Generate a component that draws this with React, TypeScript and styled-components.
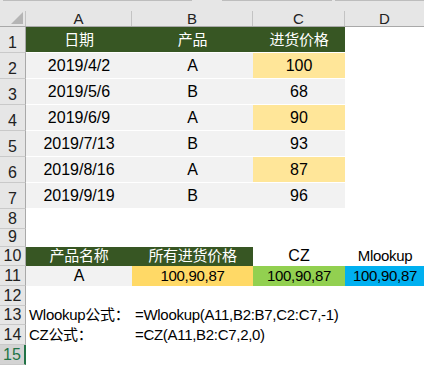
import styled, { createGlobalStyle } from "styled-components";

const GlobalStyle = createGlobalStyle`
  html, body {
    margin: 0;
    padding: 0;
    background: #fff;
    overflow: hidden;
  }
  body {
    font-family: "Liberation Sans Narrow", "Liberation Sans", "Noto Sans CJK SC", sans-serif;
    color: #000;
  }
`;

const COLS = "26px 106px 121px 92px 80px";

const DARK = "#375623";
const GREY = "#f2f2f2";
const PALE = "#ffe699";
const GOLD = "#ffd966";
const LIME = "#92d050";
const SKY = "#00b0f0";

type CellDef = {
  text?: string;
  bg?: string;
  fg?: string;
  left?: boolean;
  tight?: boolean;
};

type RowDef = {
  n: number;
  h: number;
  sep?: boolean;
  cells: CellDef[];
};

const head = (text: string): CellDef => ({ text, bg: DARK, fg: "#fff", tight: true });

const gridRows: RowDef[] = [
  { n: 1, h: 26, sep: true, cells: [head("日期"), head("产品"), head("进货价格"), {}] },
  { n: 2, h: 26, sep: true, cells: [{ text: "2019/4/2", bg: GREY }, { text: "A", bg: GREY }, { text: "100", bg: PALE }, {}] },
  { n: 3, h: 26, sep: true, cells: [{ text: "2019/5/6", bg: GREY }, { text: "B", bg: GREY }, { text: "68", bg: GREY }, {}] },
  { n: 4, h: 26, sep: true, cells: [{ text: "2019/6/9", bg: GREY }, { text: "A", bg: GREY }, { text: "90", bg: PALE }, {}] },
  { n: 5, h: 26, sep: true, cells: [{ text: "2019/7/13", bg: GREY }, { text: "B", bg: GREY }, { text: "93", bg: GREY }, {}] },
  { n: 6, h: 26, sep: true, cells: [{ text: "2019/8/16", bg: GREY }, { text: "A", bg: GREY }, { text: "87", bg: PALE }, {}] },
  { n: 7, h: 26, sep: true, cells: [{ text: "2019/9/19", bg: GREY }, { text: "B", bg: GREY }, { text: "96", bg: GREY }, {}] },
  { n: 8, h: 20, cells: [{}, {}, {}, {}] },
  { n: 9, h: 18, cells: [{}, {}, {}, {}] },
  {
    n: 10,
    h: 19,
    cells: [head("产品名称"), head("所有进货价格"), { text: "CZ" }, { text: "Mlookup", tight: true }],
  },
  {
    n: 11,
    h: 20,
    cells: [
      { text: "A", bg: GREY },
      { text: "100,90,87", bg: GOLD, tight: true },
      { text: "100,90,87", bg: LIME, tight: true },
      { text: "100,90,87", bg: SKY, tight: true },
    ],
  },
  { n: 12, h: 20, cells: [{}, {}, {}, {}] },
  {
    n: 13,
    h: 19,
    cells: [
      { text: "Wlookup公式：", left: true, tight: true },
      { text: "=Wlookup(A11,B2:B7,C2:C7,-1)", left: true, tight: true },
      {},
      {},
    ],
  },
  {
    n: 14,
    h: 20,
    cells: [
      { text: "CZ公式：", left: true, tight: true },
      { text: "=CZ(A11,B2:C7,2,0)", left: true, tight: true },
      {},
      {},
    ],
  },
  { n: 15, h: 20, cells: [{}, {}, {}, {}] },
];

const letters = ["A", "B", "C", "D"];

export default function App() {
  return (
    <>
      <GlobalStyle />
      <Sheet>
        <HeadBar>
          <StripRow>
            <StripGap $w={3} />
            <StripLine $w={189} />
            <StripGap $w={30} />
            <StripLine $w={110} />
            <StripGap $w={3} />
            <StripLine $w={89} />
          </StripRow>
          <ColHeads>
            <ColHead>
              <Corner>
                <svg width="12" height="12" viewBox="0 0 12 12">
                  <polygon points="12,0 12,12 0,12" fill="#b5b5b5" />
                </svg>
              </Corner>
            </ColHead>
            {letters.map((l) => (
              <ColHead key={l}>
                <ColLabel>{l}</ColLabel>
              </ColHead>
            ))}
          </ColHeads>
        </HeadBar>
        {gridRows.map((r) => (
          <Row key={r.n} $h={r.h}>
            <RowHead $active={r.n === 15}>{r.n}</RowHead>
            {r.cells.map((c, i) => (
              <Cell
                key={i}
                $bg={c.bg}
                $fg={c.fg}
                $left={c.left}
                $tight={c.tight}
                $sep={r.sep && !!c.bg}
                $tall={r.h > 22}
              >
                {c.text}
              </Cell>
            ))}
          </Row>
        ))}
      </Sheet>
    </>
  );
}

const Sheet = styled.div`
  width: 424px;
  height: 365px;
  overflow: hidden;
  display: flex;
  flex-direction: column;
`;

const HeadBar = styled.div`
  height: 29px;
  background: #e6e6e6;
  border-bottom: 1px solid #a9a9a9;
  box-sizing: border-box;
  display: flex;
  flex-direction: column;
`;

const StripRow = styled.div`
  display: flex;
  height: 1px;
`;

const StripLine = styled.div<{ $w: number }>`
  width: ${({ $w }) => $w}px;
  background: #bdbdbd;
`;

const StripGap = styled.div<{ $w: number }>`
  width: ${({ $w }) => $w}px;
`;

const ColHeads = styled.div`
  flex: 1;
  display: grid;
  grid-template-columns: ${COLS};
  padding-top: 10px;
`;

const ColHead = styled.div`
  border-right: 1px solid #c3c3c3;
  display: flex;
  align-items: flex-end;
  justify-content: center;
  min-width: 0;
`;

const Corner = styled.div`
  width: 100%;
  height: 100%;
  display: flex;
  align-items: flex-end;
  justify-content: flex-end;
  padding: 0 2px 2px 0;
  box-sizing: border-box;
`;

const ColLabel = styled.span`
  font-size: 15px;
  line-height: 15px;
  color: #222;
`;

const Row = styled.div<{ $h: number }>`
  display: grid;
  grid-template-columns: ${COLS};
  height: ${({ $h }) => $h}px;
  flex-shrink: 0;
`;

const RowHead = styled.div<{ $active?: boolean }>`
  background: ${({ $active }) => ($active ? "#d3d3d3" : "#e6e6e6")};
  color: ${({ $active }) => ($active ? "#217346" : "#222")};
  border-right: ${({ $active }) => ($active ? "2px solid #217346" : "1px solid #a9a9a9")};
  border-bottom: 1px solid #c9c9c9;
  box-sizing: border-box;
  display: flex;
  align-items: flex-end;
  justify-content: center;
  font-size: 16px;
  line-height: 16px;
  padding-bottom: 1px;
`;

const Cell = styled.div<{
  $bg?: string;
  $fg?: string;
  $left?: boolean;
  $tight?: boolean;
  $sep?: boolean;
  $tall?: boolean;
}>`
  background: ${({ $bg }) => $bg ?? "transparent"};
  color: ${({ $fg }) => $fg ?? "#000"};
  border-bottom: ${({ $sep }) => ($sep ? "1px solid #fff" : "none")};
  box-sizing: border-box;
  display: flex;
  align-items: flex-end;
  justify-content: ${({ $left }) => ($left ? "flex-start" : "center")};
  padding: 0 3px ${({ $tall }) => ($tall ? "4px" : "2px")};
  font-size: ${({ $tight }) => ($tight ? "15px" : "16px")};
  letter-spacing: ${({ $tight }) => ($tight ? "-0.3px" : "0")};
  line-height: 16px;
  white-space: nowrap;
  overflow: visible;
  min-width: 0;
`;
